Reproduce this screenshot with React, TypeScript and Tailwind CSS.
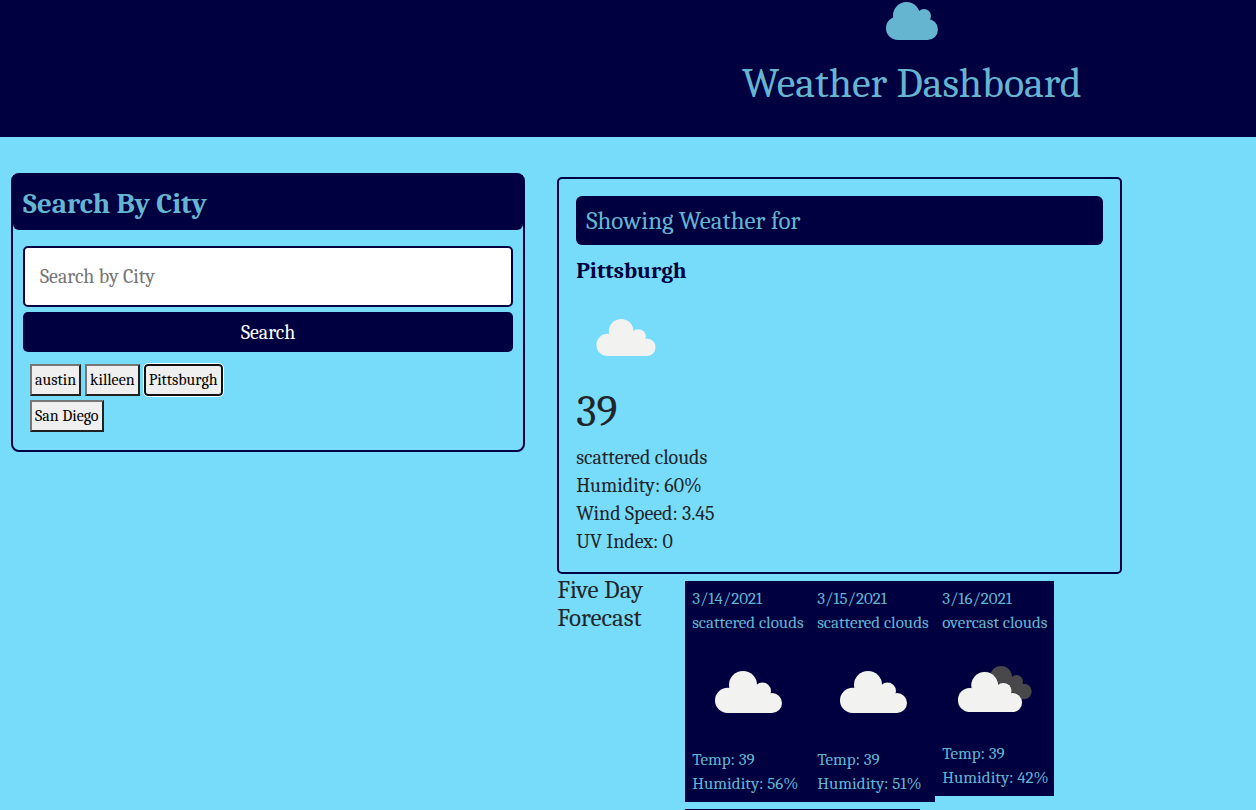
import { useState } from "react";

type Forecast = { date: string; sky: string; temp: number; humidity: number; overcast?: boolean };

const cities = ["austin", "killeen", "Pittsburgh", "San Diego"];

const forecasts: Forecast[] = [
  { date: "3/14/2021", sky: "scattered clouds", temp: 39, humidity: 56 },
  { date: "3/15/2021", sky: "scattered clouds", temp: 39, humidity: 51 },
  { date: "3/16/2021", sky: "overcast clouds", temp: 39, humidity: 42, overcast: true },
];

function CloudShape() {
  return (
    <>
      <circle cx="12.6" cy="29.4" r="12.6" />
      <circle cx="28" cy="14" r="14" />
      <circle cx="47.5" cy="20" r="8.5" />
      <circle cx="57" cy="32" r="10" />
      <path d="M12.6 42V20L20 14H40L48 20L57 26V42Z" />
    </>
  );
}

function Cloud({ className }: { className: string }) {
  return (
    <svg viewBox="0 0 67 42" className={className} fill="#f2f2f0" aria-hidden="true">
      <CloudShape />
    </svg>
  );
}

function OvercastCloud({ className }: { className: string }) {
  return (
    <svg viewBox="0 0 74 46" className={className} aria-hidden="true">
      <g fill="#48484a">
        <circle cx="43" cy="11" r="11" />
        <circle cx="58.5" cy="15.5" r="6.5" />
        <circle cx="66" cy="25.5" r="7.7" />
        <path d="M36 14H58L66 20V33H40Z" />
      </g>
      <g transform="translate(0 6) scale(0.955)" fill="#f2f2f0" stroke="#2c2c34" strokeWidth="1">
        <CloudShape />
      </g>
      <g transform="translate(0 6) scale(0.955)" fill="#f2f2f0">
        <CloudShape />
      </g>
    </svg>
  );
}

function HeaderCloud() {
  return (
    <svg viewBox="0 0 52 38" className="h-[38px] w-[52px]" fill="#65b5d1" aria-hidden="true">
      <circle cx="11.8" cy="26.2" r="11.8" />
      <circle cx="20.5" cy="13.5" r="13.5" />
      <circle cx="38" cy="14" r="7" />
      <circle cx="41.5" cy="27.5" r="10.5" />
      <path d="M11.8 38V16H34L44 16V22L41.5 38Z" />
    </svg>
  );
}

export default function App() {
  const [selected, setSelected] = useState("Pittsburgh");

  return (
    <div className="h-screen overflow-hidden bg-[#77dcfa] font-[Cambria,Caladea,'Liberation_Serif',serif] text-[#212529]">
      <header className="flex flex-col items-center bg-[#000040] pt-0.5 pb-[29px] pl-[45.2%] text-[#65b5d1]">
        <HeaderCloud />
        <h1 className="mt-5 text-[42px] leading-12">Weather Dashboard</h1>
      </header>

      <main className="flex items-start gap-8 pt-9 pl-[11px]">
        <section className="w-[41.3%] shrink-0 rounded-lg border-2 border-[#000040] pb-[18px]">
          <h2 className="rounded-b-md bg-[#000040] px-2.5 pt-3 pb-2.5 text-[29px] leading-[33px] font-bold text-[#65b5d1]">
            Search By City
          </h2>
          <form className="px-2.5 pt-4" onSubmit={(e) => e.preventDefault()}>
            <input
              type="text"
              aria-label="Search by City"
              placeholder="Search by City"
              className="block h-[61px] w-full rounded-[5px] border-2 border-[#000040] bg-white px-[15px] text-xl placeholder:text-[#757575]"
            />
            <button type="submit" className="mt-[5px] block h-10 w-full rounded-[5px] bg-[#000040] pt-0.5 text-xl text-white">
              Search
            </button>
          </form>
          <div className="mt-3 ml-[17px] flex w-[210px] flex-wrap gap-1">
            {cities.map((city) => (
              <button
                key={city}
                type="button"
                onClick={() => setSelected(city)}
                className={
                  city === selected
                    ? "h-8 rounded border-2 border-[#101010] bg-[#efefef] px-[3px] text-base text-black outline outline-white"
                    : "h-8 border-2 border-t-[#767676] border-r-[#212121] border-b-[#212121] border-l-[#767676] bg-[#efefef] px-[3px] text-base text-black"
                }
              >
                {city}
              </button>
            ))}
          </div>
        </section>

        <div className="w-[45.4%] pt-1">
          <section className="rounded-[5px] border-2 border-[#000040] p-[17px] pb-4">
            <h2 className="rounded-md bg-[#000040] px-2.5 py-2 text-[25px] leading-[33px] text-[#65b5d1]">
              Showing Weather for
            </h2>
            <h3 className="mt-2.5 text-[23px] leading-8 font-bold text-[#000040]">{selected}</h3>
            <Cloud className="mt-8 ml-5 h-[37px] w-[60px]" />
            <p className="mt-8 text-[44px] leading-12">39</p>
            <ul className="mt-2 text-xl leading-7">
              <li>scattered clouds</li>
              <li>Humidity: 60%</li>
              <li>Wind Speed: 3.45</li>
              <li>UV Index: 0</li>
            </ul>
          </section>

          <section className="flex">
            <h2 className="mt-0.5 w-32 shrink-0 text-[25px] leading-7">Five Day Forecast</h2>
            <div className="pt-[7px]">
              <div className="flex items-start">
                {forecasts.map((day) => (
                  <article
                    key={day.date}
                    className={
                      day.overcast
                        ? "h-[215px] w-[119px] bg-[#000040] pt-1.5 pl-[7px] text-[17px] leading-6 whitespace-nowrap text-[#65b5d1]"
                        : "h-[221px] w-[125px] bg-[#000040] pt-1.5 pl-[7px] text-[17px] leading-6 whitespace-nowrap text-[#65b5d1]"
                    }
                  >
                    <p>{day.date}</p>
                    <p>{day.sky}</p>
                    {day.overcast ? (
                      <OvercastCloud className="mt-[31px] mb-[30px] ml-4 h-[46px] w-[74px]" />
                    ) : (
                      <Cloud className="mt-9 mb-[35px] ml-[23px] h-[42px] w-[67px]" />
                    )}
                    <p>Temp: {day.temp}</p>
                    <p>Humidity: {day.humidity}%</p>
                  </article>
                ))}
              </div>
              <div className="mt-[7px] h-6 w-[235px] bg-[#000040]" />
            </div>
          </section>
        </div>
      </main>
    </div>
  );
}
